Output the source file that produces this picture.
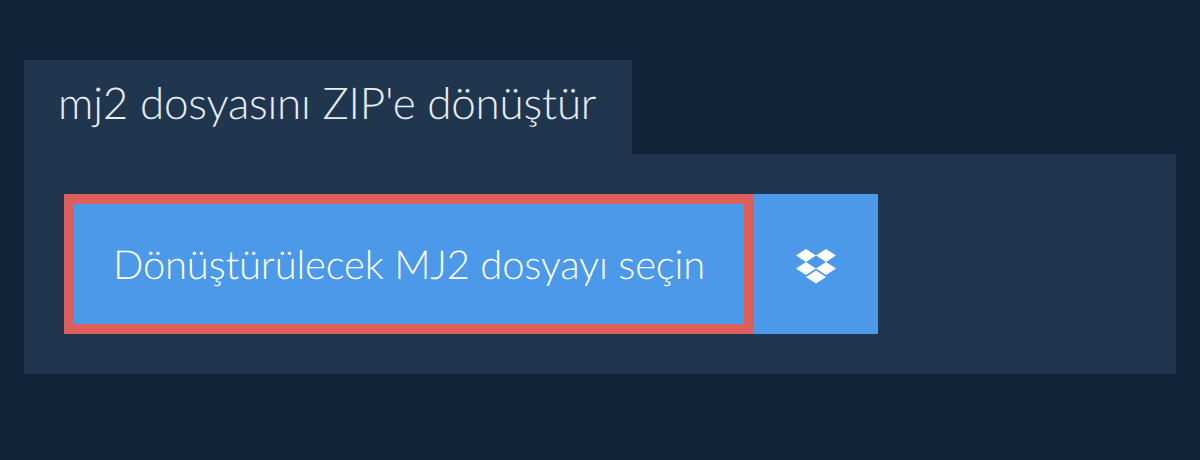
<template>
  <div class="page">
    <h1 class="tab">mj2 dosyasını ZIP'e dönüştür</h1>
    <div class="panel">
      <div class="picker">
        <button class="choose">Dönüştürülecek MJ2 dosyayı seçin</button>
        <button class="dropbox" aria-label="Dropbox">
          <svg class="dropbox-icon" viewBox="0 0 40 35" width="40" height="35">
            <path fill="#fff" d="M10 0 0 6.5 10 13l10-6.5zM30 0 20 6.5 30 13l10-6.5zM0 19.5 10 26l10-6.5L10 13zM30 13l-10 6.5L30 26l10-6.5zM10 28l10 6.5L30 28l-10-6.5z"/>
          </svg>
        </button>
      </div>
    </div>
  </div>
</template>

<style>
html, body {
  margin: 0;
  background: #0f2439;
}
</style>

<style scoped>
.page {
  height: 460px;
  box-sizing: border-box;
  padding: 60px 24px 0;
  background: #0f2439;
  font-family: Lato, sans-serif;
  color: #fff;
  text-rendering: geometricPrecision;
}
.tab {
  display: block;
  width: fit-content;
  margin: 0;
  padding: 0 36px 0 34px;
  height: 94px;
  line-height: 86px;
  font-size: 44px;
  font-weight: 300;
  letter-spacing: -0.2px;
  color: #e8eef5;
  background: #20364f;
}
.panel {
  padding: 40px;
  background: #20364f;
}
.picker {
  display: flex;
  height: 140px;
}
.choose {
  width: 690px;
  box-sizing: border-box;
  border: 10px solid #dd5f5c;
  background: #4b99e8;
  color: #fff;
  font: 300 40px Lato, sans-serif;
  letter-spacing: -0.2px;
  text-rendering: geometricPrecision;
  padding: 0;
}
.dropbox {
  width: 124px;
  border: 0;
  padding: 0;
  background: #4b99e8;
  display: flex;
  align-items: center;
  justify-content: center;
}
.dropbox-icon {
  margin-top: 4px;
}
</style>
